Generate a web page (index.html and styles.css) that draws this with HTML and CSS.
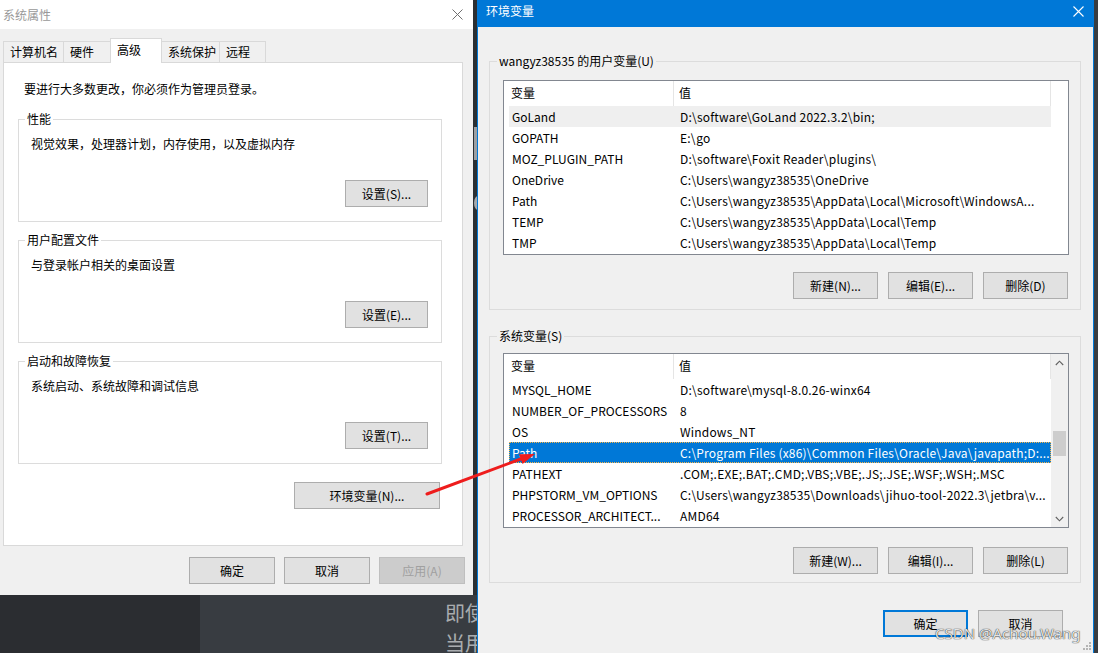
FILE: index.html
```html
<!DOCTYPE html>
<html lang="zh-CN">
<head>
<meta charset="utf-8">
<title>环境变量</title>
<link rel="stylesheet" href="styles.css">
</head>
<body>
<div class="desktop">
  <div class="bg-text">即使<br>当用</div>
  <div class="gap-strip"><span class="strip-bar"></span><span class="strip-dot"></span></div>

  <section class="win win-sys">
    <header class="titlebar titlebar-inactive">
      <span class="title">系统属性</span>
      <svg class="close" viewBox="0 0 11 11"><path d="M0.5 0.5 L10.5 10.5 M10.5 0.5 L0.5 10.5" stroke="#6f6f6f" stroke-width="1" fill="none"/></svg>
    </header>
    <nav class="tabs">
      <span class="tab tab-w61">计算机名</span>
      <span class="tab tab-w48">硬件</span>
      <span class="tab tab-on tab-w52">高级</span>
      <span class="tab tab-w59">系统保护</span>
      <span class="tab tab-w47">远程</span>
    </nav>
    <div class="panel">
      <p class="intro">要进行大多数更改，你必须作为管理员登录。</p>
      <div class="group group-sys">
        <span class="group-label">性能</span>
        <p class="group-desc">视觉效果，处理器计划，内存使用，以及虚拟内存</p>
        <button class="btn btn-set">设置(S)...</button>
      </div>
      <div class="group group-sys">
        <span class="group-label">用户配置文件</span>
        <p class="group-desc">与登录帐户相关的桌面设置</p>
        <button class="btn btn-set">设置(E)...</button>
      </div>
      <div class="group group-sys">
        <span class="group-label">启动和故障恢复</span>
        <p class="group-desc">系统启动、系统故障和调试信息</p>
        <button class="btn btn-set">设置(T)...</button>
      </div>
      <button class="btn btn-env">环境变量(N)...</button>
    </div>
    <footer class="dlg-footer">
      <button class="btn btn-wide">确定</button>
      <button class="btn btn-wide">取消</button>
      <button class="btn btn-wide" disabled>应用(A)</button>
    </footer>
  </section>

  <section class="win win-env">
    <header class="titlebar titlebar-active">
      <span class="title">环境变量</span>
      <svg class="close" viewBox="0 0 11 11"><path d="M0.5 0.5 L10.5 10.5 M10.5 0.5 L0.5 10.5" stroke="#ffffff" stroke-width="1.1" fill="none"/></svg>
    </header>
    <div class="env-body">
      <div class="group group-env group-user">
        <span class="group-label">wangyz38535 的用户变量(U)</span>
        <div class="list">
          <div class="list-content">
            <div class="list-head"><span class="head-name">变量</span><span class="head-val">值</span></div>
            <div class="list-rows">
              <div class="row row-hover"><span class="cell-name">GoLand</span><span class="cell-val">D:\software\GoLand 2022.3.2\bin;</span></div>
              <div class="row"><span class="cell-name">GOPATH</span><span class="cell-val">E:\go</span></div>
              <div class="row"><span class="cell-name">MOZ_PLUGIN_PATH</span><span class="cell-val">D:\software\Foxit Reader\plugins\</span></div>
              <div class="row"><span class="cell-name">OneDrive</span><span class="cell-val">C:\Users\wangyz38535\OneDrive</span></div>
              <div class="row"><span class="cell-name">Path</span><span class="cell-val">C:\Users\wangyz38535\AppData\Local\Microsoft\WindowsA...</span></div>
              <div class="row"><span class="cell-name">TEMP</span><span class="cell-val">C:\Users\wangyz38535\AppData\Local\Temp</span></div>
              <div class="row"><span class="cell-name">TMP</span><span class="cell-val">C:\Users\wangyz38535\AppData\Local\Temp</span></div>
            </div>
          </div>
        </div>
        <div class="btn-row">
          <button class="btn btn-sm">新建(N)...</button>
          <button class="btn btn-sm">编辑(E)...</button>
          <button class="btn btn-sm">删除(D)</button>
        </div>
      </div>

      <div class="group group-env group-sysvar">
        <span class="group-label">系统变量(S)</span>
        <div class="list">
          <div class="list-content">
            <div class="list-head"><span class="head-name">变量</span><span class="head-val">值</span></div>
            <div class="list-rows">
              <div class="row"><span class="cell-name">MYSQL_HOME</span><span class="cell-val">D:\software\mysql-8.0.26-winx64</span></div>
              <div class="row"><span class="cell-name">NUMBER_OF_PROCESSORS</span><span class="cell-val">8</span></div>
              <div class="row"><span class="cell-name">OS</span><span class="cell-val">Windows_NT</span></div>
              <div class="row row-sel"><span class="cell-name">Path</span><span class="cell-val">C:\Program Files (x86)\Common Files\Oracle\Java\javapath;D:...</span></div>
              <div class="row"><span class="cell-name">PATHEXT</span><span class="cell-val">.COM;.EXE;.BAT;.CMD;.VBS;.VBE;.JS;.JSE;.WSF;.WSH;.MSC</span></div>
              <div class="row"><span class="cell-name">PHPSTORM_VM_OPTIONS</span><span class="cell-val">C:\Users\wangyz38535\Downloads\jihuo-tool-2022.3\jetbra\v...</span></div>
              <div class="row"><span class="cell-name">PROCESSOR_ARCHITECT...</span><span class="cell-val">AMD64</span></div>
            </div>
          </div>
          <div class="scrollbar">
            <span class="sb-btn"><svg class="chev" viewBox="0 0 9 6"><path d="M0.8 5 L4.5 1.2 L8.2 5" stroke="#606060" stroke-width="1.1" fill="none"/></svg></span>
            <span class="sb-track"><span class="sb-thumb"></span></span>
            <span class="sb-btn"><svg class="chev" viewBox="0 0 9 6"><path d="M0.8 1 L4.5 4.8 L8.2 1" stroke="#606060" stroke-width="1.1" fill="none"/></svg></span>
          </div>
        </div>
        <div class="btn-row">
          <button class="btn btn-sm">新建(W)...</button>
          <button class="btn btn-sm">编辑(I)...</button>
          <button class="btn btn-sm">删除(L)</button>
        </div>
      </div>

      <footer class="env-footer">
        <button class="btn btn-sm btn-default">确定</button>
        <button class="btn btn-sm">取消</button>
      </footer>
    </div>
  </section>

  <svg class="arrow" viewBox="0 0 1098 653">
    <line x1="427" y1="494" x2="522" y2="458.5" stroke="#ee1d1d" stroke-width="3" stroke-linecap="round"/>
    <polygon points="535,454 522.6,464 518.9,454.2" fill="#ee1d1d"/>
  </svg>
  <svg class="grip" viewBox="0 0 10 10">
    <rect x="7" y="1" width="2" height="2" fill="#b4b4b4"/>
    <rect x="4" y="4" width="2" height="2" fill="#b4b4b4"/>
    <rect x="7" y="4" width="2" height="2" fill="#b4b4b4"/>
    <rect x="1" y="7" width="2" height="2" fill="#b4b4b4"/>
    <rect x="4" y="7" width="2" height="2" fill="#b4b4b4"/>
    <rect x="7" y="7" width="2" height="2" fill="#b4b4b4"/>
  </svg>
  <div class="watermark">CSDN @Achou.Wang</div>
</div>
</body>
</html>
```
FILE: styles.css
```css
* { box-sizing: border-box; margin: 0; padding: 0; }
html, body { width: 1098px; height: 653px; overflow: hidden; }
body {
  font: 12px/16px "Noto Sans CJK SC", "Noto Sans", sans-serif;
  color: #000;
  background: #383c41;
}
.desktop {
  position: relative;
  width: 1098px;
  height: 653px;
  overflow: hidden;
  background: linear-gradient(to right, #2b2d31 0, #2b2d31 200px, #383c41 200px);
}
.bg-text {
  position: absolute;
  left: 445px;
  top: 598px;
  font-size: 20px;
  line-height: 30px;
  color: #a9acaf;
}
.gap-strip {
  position: absolute;
  left: 473px;
  top: 0;
  width: 4px;
  height: 595px;
  background: #2b2f33;
}
.strip-bar {
  position: absolute;
  left: 1px;
  top: 127px;
  width: 3px;
  height: 33px;
  background: #9da0a3;
}
.strip-dot {
  position: absolute;
  left: 1px;
  top: 196px;
  width: 8px;
  height: 14px;
  border-radius: 50%;
  background: #a6a9ac;
}

/* windows */
.win {
  position: absolute;
  top: 0;
  background: #f0f0f0;
  display: flex;
  flex-direction: column;
}
.win-sys { left: 0; width: 473px; height: 595px; }
.win-env {
  left: 477px;
  width: 617px;
  height: 670px;
  border: 1px solid #0078d7;
  border-top: 0;
}
.titlebar {
  display: flex;
  align-items: center;
  justify-content: space-between;
  flex: none;
}
.titlebar-inactive {
  height: 29px;
  background: #fff;
  color: #999;
  padding: 0 10px 0 3px;
}
.titlebar-active {
  height: 27px;
  background: #0078d7;
  color: #fff;
  padding: 0 9px 5px 8px;
}
.close { width: 11px; height: 11px; display: block; }

/* tabs */
.tabs {
  display: flex;
  align-items: flex-end;
  height: 33px;
  padding-left: 3px;
  flex: none;
}
.tab {
  height: 21px;
  line-height: 20px;
  padding: 0 6px;
  border: 1px solid #d9d9d9;
  border-bottom: 0;
  background: #f0f0f0;
  margin-right: -1px;
  white-space: nowrap;
}
.tab-on {
  height: 25px;
  line-height: 22px;
  margin-bottom: -1px;
  background: #fff;
  position: relative;
  z-index: 1;
}
.tab-w61 { width: 61px; }
.tab-w48 { width: 48px; }
.tab-w52 { width: 52px; }
.tab-w59 { width: 59px; }
.tab-w47 { width: 47px; }

.panel {
  margin-left: 3px;
  width: 460px;
  height: 484px;
  border: 1px solid #d9d9d9;
  background: #fff;
  padding: 18px 20px 0 14px;
  display: flex;
  flex-direction: column;
  flex: none;
}
.intro { padding-left: 6px; line-height: 16px; }

/* group boxes */
.group {
  border: 1px solid #dcdcdc;
  display: flex;
  flex-direction: column;
  flex: none;
}
.group-sys { height: 103px; margin-top: 18px; }
.intro + .group-sys { margin-top: 22px; }
.group-label {
  align-self: flex-start;
  margin: -9px 0 0 6px;
  padding: 0 2px;
  background: #fff;
  line-height: 16px;
  white-space: nowrap;
}
.group-desc { margin: 9px 0 0 12px; line-height: 16px; }

/* buttons */
.btn {
  font: inherit;
  font-size: 12px;
  line-height: 16px;
  color: #000;
  background: #e1e1e1;
  border: 1px solid #adadad;
  height: 27px;
  padding: 0;
  text-align: center;
  white-space: nowrap;
  flex: none;
}
.btn:disabled { background: #cccccc; border-color: #bfbfbf; color: #a0a0a0; }
.btn-set { width: 83px; align-self: flex-end; margin: auto 13px 14px 0; }
.btn-env { width: 146px; align-self: flex-end; margin: 18px 2px 0 0; }
.btn-wide { width: 86px; }
.btn-sm { width: 85px; }
.btn-default { border: 2px solid #0078d7; }
.dlg-footer {
  display: flex;
  justify-content: flex-end;
  gap: 9px;
  padding: 11px 8px 0 0;
}

/* env window */
.env-body {
  padding: 34px 12px 0 11px;
  display: flex;
  flex-direction: column;
}
.group-env .group-label { background: #f0f0f0; margin-left: 7px; }
.group-user { height: 249px; }
.group-sysvar { height: 247px; margin-top: 26px; }
.list {
  margin: 11px 11px 0 13px;
  height: 175px;
  border: 1px solid #828790;
  background: #fff;
  display: flex;
  flex: none;
}
.group-sysvar .list { margin-top: 9px; }
.list-content { width: 547px; flex: none; overflow: hidden; }
.list-head { display: flex; height: 25px; line-height: 24px; }
.head-name { width: 170px; padding-left: 7px; border-right: 1px solid #e5e5e5; }
.head-val { flex: 1; padding-left: 5px; border-right: 1px solid #e5e5e5; }
.list-rows { padding-left: 5px; }
.row { display: flex; height: 21px; line-height: 21px; white-space: nowrap; }
.cell-name { width: 165px; flex: none; padding-left: 3px; overflow: hidden; }
.cell-val { flex: 1; min-width: 0; padding: 0 0 0 6px; overflow: hidden; letter-spacing: 0.2px; }
.row-hover { background: #efefef; }
.row-sel {
  background: #0078d7;
  color: #fff;
  outline: 1px dotted #f7b54a;
  outline-offset: -1px;
}
.scrollbar { width: 17px; background: #f0f0f0; display: flex; flex-direction: column; }
.sb-btn { height: 17px; display: flex; align-items: center; justify-content: center; flex: none; }
.chev { width: 9px; height: 6px; display: block; }
.sb-track { flex: 1; display: block; }
.sb-thumb { display: block; margin: 60px 2px 0; height: 25px; background: #cdcdcd; }
.btn-row {
  display: flex;
  justify-content: flex-end;
  gap: 10px;
  margin: 17px 12px 0 0;
}
.group-sysvar .btn-row { margin-top: 19px; }
.env-footer {
  display: flex;
  justify-content: flex-end;
  gap: 10px;
  padding: 27px 18px 0 0;
}

/* overlays */
.arrow {
  position: absolute;
  left: 0;
  top: 0;
  width: 1098px;
  height: 653px;
  pointer-events: none;
}
.grip { position: absolute; left: 1082px; top: 641px; width: 10px; height: 10px; }
.watermark {
  position: absolute;
  left: 935px;
  top: 623px;
  font: 15px/20px "Noto Sans", sans-serif;
  color: rgba(255, 255, 255, 0.9);
  text-shadow: 0 0 1px rgba(0, 0, 0, 0.85), 0 0 1px rgba(0, 0, 0, 0.6);
  white-space: nowrap;
}
```
